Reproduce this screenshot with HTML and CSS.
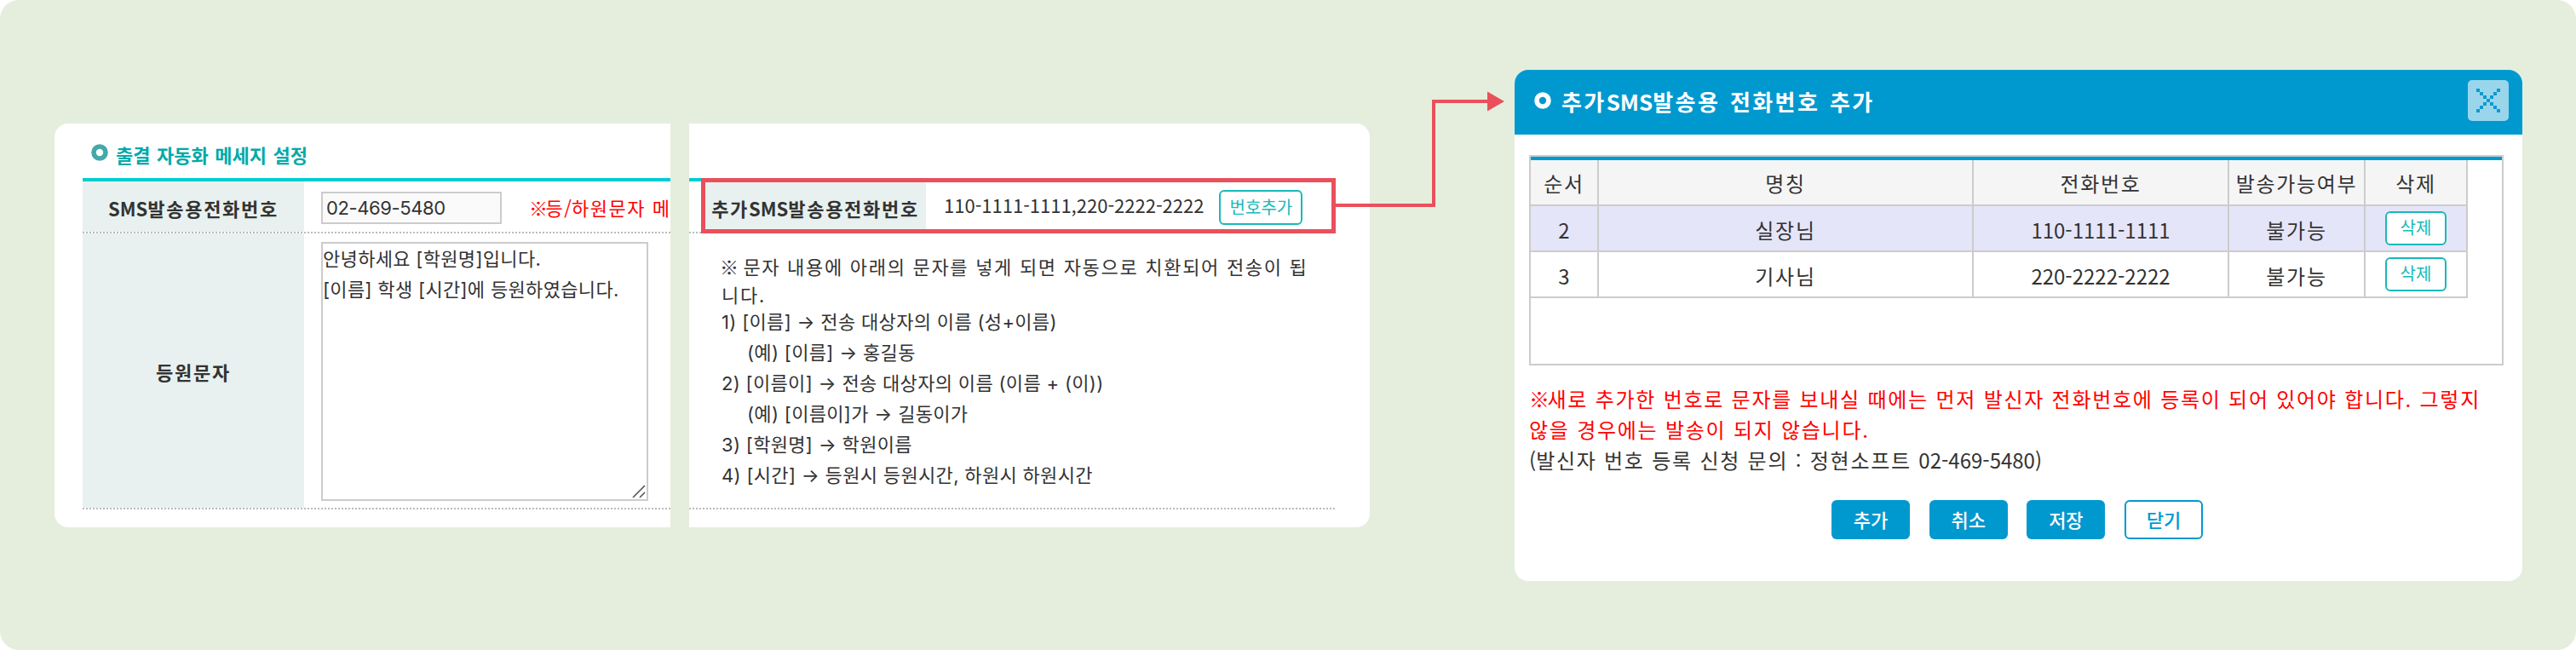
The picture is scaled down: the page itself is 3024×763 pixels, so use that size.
FILE: index.html
```html
<!DOCTYPE html>
<html lang="ko">
<head>
<meta charset="utf-8">
<title>출결 자동화 메세지 설정</title>
<link rel="stylesheet" href="styles.css">
</head>
<body>
<main class="stage">
  <section class="card card-left">
    <h2 class="title"><svg class="bullet" viewBox="0 0 20 20"><circle cx="10" cy="10" r="7" fill="none" stroke="#43a9a9" stroke-width="5.6"/></svg><span>출결 자동화 메세지 설정</span></h2>
    <div class="grid">
      <div class="row row-short">
        <div class="th"><span><span class="n">SMS</span>발송용전화번호</span></div>
        <div class="td"><div class="input">02-469-5480</div><span class="warn"><span class="mark">※</span>등<span class="n">/</span>하원문자 메</span></div>
      </div>
      <div class="row row-tall">
        <div class="th">등원문자</div>
        <div class="td td-top"><div class="textarea">안녕하세요 [학원명]입니다.<br>[이름] 학생 [시간]에 등원하였습니다.
          <svg class="grip" viewBox="0 0 16 16"><path d="M1 15L15 1M9 15L15 9" stroke="#555" stroke-width="1.6"/></svg></div></div>
      </div>
    </div>
  </section>

  <section class="card card-right">
    <div class="grid grid-right">
      <div class="row row-short">
        <div class="th"><span>추가<span class="n">SMS</span>발송용전화번호</span></div>
        <div class="td"><span class="n phones">110-1111-1111,220-2222-2222</span><span class="btn-line add">번호추가</span></div>
      </div>
      <div class="row row-tall help">
        <p class="wide"><span class="mark">※</span> 문자 내용에 아래의 문자를 넣게 되면 자동으로 치환되어 전송이 됩</p>
        <p class="wide">니다.</p>
        <p>1) [이름] → 전송 대상자의 이름 (성+이름)</p>
        <p class="sub">(예) [이름] → 홍길동</p>
        <p>2) [이름이] → 전송 대상자의 이름 (이름 + (이))</p>
        <p class="sub">(예) [이름이]가 → 길동이가</p>
        <p>3) [학원명] → 학원이름</p>
        <p>4) [시간] → 등원시 등원시간, 하원시 하원시간</p>
      </div>
    </div>
    <div class="focus"></div>
    <svg class="arrow" viewBox="0 0 200 140"><path d="M0 134H115V12H180" fill="none" stroke="#e9505b" stroke-width="4"/><path d="M178 .5L198 12L178 23.5Z" fill="#e9505b"/></svg>
  </section>

  <section class="modal">
    <header class="modal-head">
      <svg class="bullet" viewBox="0 0 20 20"><circle cx="10" cy="10" r="7" fill="none" stroke="#fff" stroke-width="5.6"/></svg>
      <h2>추가<span class="n">SMS</span>발송용 전화번호 추가</h2>
      <span class="close"><svg viewBox="0 0 48 48"><path d="M10 10h4v4h-4zM14 14h4v4h-4zM18 18h4v4h-4zM22 22h4v4h-4zM26 26h4v4h-4zM30 30h4v4h-4zM34 34h4v4h-4zM34 10h4v4h-4zM30 14h4v4h-4zM26 18h4v4h-4zM18 26h4v4h-4zM14 30h4v4h-4zM10 34h4v4h-4z" fill="#0e9ace"/></svg></span>
    </header>
    <div class="list">
      <div class="tr head"><span><b>순서</b></span><span><b>명칭</b></span><span><b>전화번호</b></span><span><b>발송가능여부</b></span><span><b>삭제</b></span></div>
      <div class="tr on"><span><b class="n">2</b></span><span><b>실장님</b></span><span><b class="n">110-1111-1111</b></span><span><b>불가능</b></span><span><b class="btn-line del">삭제</b></span></div>
      <div class="tr"><span><b class="n">3</b></span><span><b>기사님</b></span><span><b class="n">220-2222-2222</b></span><span><b>불가능</b></span><span><b class="btn-line del">삭제</b></span></div>
    </div>
    <div class="note">
      <p class="red"><span class="mark">※</span>새로 추가한 번호로 문자를 보내실 때에는 먼저 발신자 전화번호에 등록이 되어 있어야 합니다. 그렇지</p>
      <p class="red">않을 경우에는 발송이 되지 않습니다.</p>
      <p><span class="n">(</span>발신자 번호 등록 신청 문의 : 정현소프트 <span class="n">02-469-5480)</span></p>
    </div>
    <div class="actions"><span class="btn">추가</span><span class="btn">취소</span><span class="btn">저장</span><span class="btn ghost">닫기</span></div>
  </section>
</main>
</body>
</html>
```
FILE: styles.css
```css
* { box-sizing: border-box; margin: 0; padding: 0; }
body { background: #fff; font-family: "Noto Sans CJK KR", sans-serif; font-size: 22px; color: #333; }
b { font-weight: 400; }
.stage { width: 3024px; height: 763px; background: #e5eedd; border-radius: 22px; display: flex; align-items: flex-start; padding-left: 64px; }
.n { letter-spacing: 0; word-spacing: 0; }
.mark { letter-spacing: -2.5px; }

.card { margin-top: 145px; height: 474px; background: #fff; white-space: nowrap; }
.card-left { width: 723px; border-radius: 16px 0 0 16px; padding: 0 0 0 33px; overflow: hidden; }
.card-right { width: 799px; margin-left: 22px; border-radius: 0 16px 16px 0; padding-top: 64px; position: relative; }
.bullet { width: 20px; height: 20px; flex: none; }
.title { height: 64px; display: flex; padding: 24px 0 0 10px; font-size: 22px; font-weight: 700; line-height: 24px; color: #00a9a9; word-spacing: 1.4px; }
.title span { margin: 0 0 0 9px; }

.grid { border-top: 4px solid #00cdcf; }
.row { display: flex; border-bottom: 2px dotted #bbb; }
.row-short { height: 61px; }
.row-tall { height: 324px; }
.th { width: 260px; flex: none; background: #e8f1ef; display: flex; align-items: center; justify-content: center; padding-top: 2px; font-weight: 700; letter-spacing: 1.7px; }
.td { flex: 1; display: flex; align-items: center; padding-left: 20px; }
.td-top { align-items: flex-start; padding-top: 10px; }
.input { width: 212px; height: 38px; margin-top: 2px; flex: none; border: 2px solid #ccc; background: #fafafa; padding-left: 4px; font-family: Inter, "Noto Sans CJK KR", sans-serif; line-height: 34px; letter-spacing: -.4px; }
.warn { margin-left: 32px; color: #f00; letter-spacing: 1.5px; word-spacing: .3px; }
.textarea { position: relative; width: 384px; height: 304px; border: 2px solid #ccc; font-family: Inter, "Noto Sans CJK KR", sans-serif; line-height: 36px; letter-spacing: .33px; }
.grip { position: absolute; right: 1px; bottom: 1px; width: 16px; height: 16px; }

.grid-right { margin-right: 41px; }
.grid-right .row-short { padding-left: 18px; }
.phones { line-height: 30px; margin-bottom: 5px; padding-left: 1px; }
.btn-line { display: inline-flex; align-items: center; justify-content: center; border: 2px solid #19b9b9; border-radius: 6px; background: #fff; color: #19b9b9; font-size: 20px; letter-spacing: 0; padding-bottom: 3px; }
.add { width: 98px; height: 41px; margin: 2px 0 0 18px; }
.help { flex-direction: column; padding: 20px 0 0 38px; font-family: Inter, "Noto Sans CJK KR", sans-serif; line-height: 36px; letter-spacing: .33px; }
.help p { height: 36px; }
.help .wide { height: 33px; font-family: "Noto Sans CJK KR", sans-serif; letter-spacing: 1.7px; }
.help .mark { margin-left: -2px; }
.help .sub { padding-left: 30px; }
.focus { position: absolute; left: 14px; top: 64px; width: 745px; height: 65px; border: 5px solid #e9505b; }
.arrow { position: absolute; left: 759px; top: -38px; width: 200px; height: 140px; }

.modal { margin: 82px 0 0 170px; width: 1183px; height: 600px; background: #fff; border-radius: 16px; overflow: hidden; font-size: 24px; letter-spacing: 1.7px; word-spacing: .2px; white-space: nowrap; }
.modal-head { height: 76px; background: #0099cf; display: flex; padding: 12px 16px 0 23px; color: #fff; }
.modal-head .bullet { margin-top: 14px; }
.modal-head h2 { flex: 1; margin-left: 12px; font-size: 26px; line-height: 50px; letter-spacing: 2.4px; word-spacing: 2px; }
.close { width: 48px; height: 48px; border-radius: 5px; background: #99d6ec; }
.close svg { display: block; }
.list { margin: 24px 22px 0 17px; height: 247px; border: 2px solid #ccc; }
.tr { display: grid; grid-template-columns: 80px 440px 300px 160px 120px; width: 1100px; height: 54px; }
.tr span { border-right: 2px solid #ccc; border-bottom: 2px solid #ccc; display: flex; align-items: center; justify-content: center; padding-top: 2px; }
.tr span:last-child { padding-top: 0; }
.head { width: 1140px; height: 58px; border-top: 4px solid #0099cf; }
.head span { background: #f5f5f5; padding-top: 0; }
.on span { background: #e5e5f9; }
.tr .del { width: 72px; height: 40px; }
.note { margin: 21px 0 0 17px; line-height: 36px; }
.red { color: #f00; }
.actions { display: flex; gap: 22.7px; margin: 29px 0 0 372px; font-size: 22px; letter-spacing: 0; }
.btn { width: 92px; height: 46px; padding-bottom: 3px; border-radius: 6px; background: #0099cf; color: #fff; font-weight: 500; display: flex; align-items: center; justify-content: center; }
.ghost { background: #fff; color: #0099cf; border: 2px solid #0099cf; }
```
